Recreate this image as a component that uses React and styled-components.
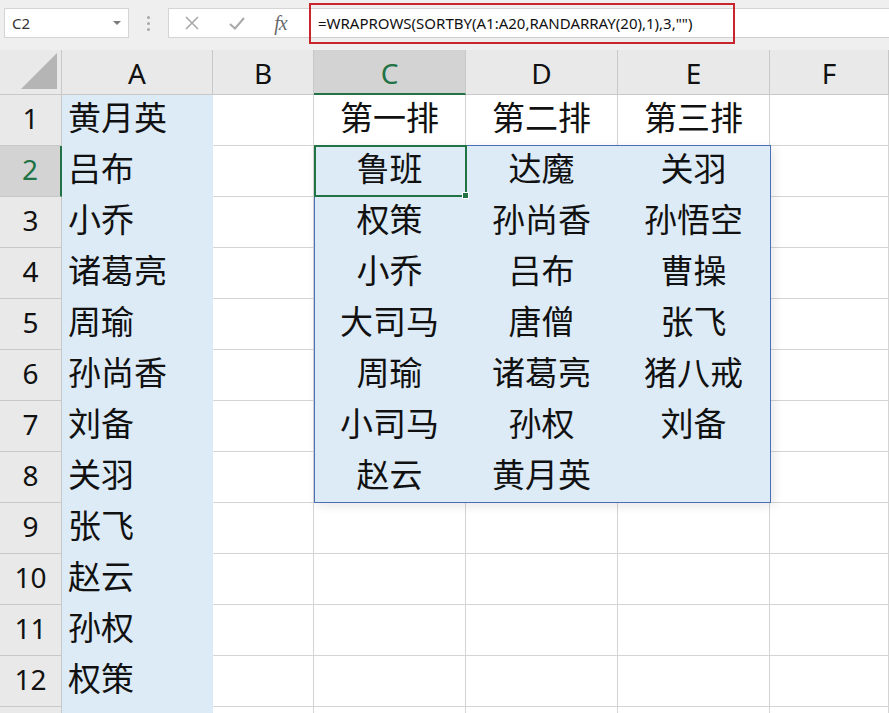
import React from "react";
import styled, { createGlobalStyle } from "styled-components";

const Global = createGlobalStyle`
  html, body { margin: 0; padding: 0; background: #ffffff; overflow: hidden; }
  body { width: 889px; height: 713px; font-family: "Noto Sans", "Noto Sans CJK SC", sans-serif; }
`;

const Page = styled.div`
  width: 889px;
  height: 713px;
  overflow: hidden;
  display: flex;
  flex-direction: column;
  background: #e9e9e9;
`;

const Toolbar = styled.div`
  flex-shrink: 0;
  height: 50px;
  box-sizing: border-box;
  padding-top: 8px;
  display: flex;
  align-items: flex-start;
  background: #efefef;
`;

const NameBox = styled.div`
  margin-left: 4px;
  width: 125px;
  height: 30px;
  box-sizing: border-box;
  background: #fff;
  border: 1px solid #d4d4d4;
  display: flex;
  align-items: center;
  justify-content: space-between;
  padding: 0 7px 0 7px;
  font-family: "Noto Sans", sans-serif;
  font-size: 15px;
  color: #333;
`;

const Caret = styled.span`
  width: 0;
  height: 0;
  border-left: 4px solid transparent;
  border-right: 4px solid transparent;
  border-top: 4px solid #7a7a7a;
`;

const Dots = styled.div`
  width: 39px;
  height: 30px;
  display: flex;
  flex-direction: column;
  align-items: center;
  justify-content: center;
  gap: 3px;
  span { width: 3px; height: 3px; background: #a8a8a8; border-radius: 50%; }
`;

const ButtonBox = styled.div`
  width: 135px;
  height: 30px;
  box-sizing: border-box;
  background: #fff;
  border: 1px solid #d4d4d4;
  border-right: none;
  display: flex;
  align-items: center;
`;

const IconBtn = styled.div`
  width: ${(p) => p.$w}px;
  height: 28px;
  display: flex;
  align-items: center;
  justify-content: center;
`;

const Fx = styled.span`
  font-family: "Liberation Serif", serif;
  font-style: italic;
  font-size: 20px;
  color: #6b6b6b;
  letter-spacing: -1px;
`;

const FormulaField = styled.div`
  position: relative;
  flex: 1;
  height: 30px;
  box-sizing: border-box;
  background: #fff;
  border-top: 1px solid #d4d4d4;
  border-bottom: 1px solid #cfcfcf;
  display: flex;
  align-items: center;
  padding-left: 15px;
  font-family: "Noto Sans", sans-serif;
  font-size: 15px;
  color: #111;
  white-space: nowrap;
`;

const RedBox = styled.div`
  position: absolute;
  left: 6px;
  top: -6px;
  width: 426px;
  height: 41px;
  box-sizing: border-box;
  border: 2px solid #c9252c;
  pointer-events: none;
`;

const Sheet = styled.div`
  position: relative;
  flex-shrink: 0;
  display: grid;
  grid-template-columns: 62px 151px 101px 152px 152px 152px 119px;
  grid-template-rows: 45px repeat(13, 51px);
  background: #fff;
`;

const Corner = styled.div`
  background: #e9e9e9;
  border-right: 1px solid #c8c8c8;
  border-bottom: 1px solid #c8c8c8;
  box-sizing: border-box;
  position: relative;
  svg { position: absolute; right: 4px; bottom: 5px; }
`;

const ColHead = styled.div`
  box-sizing: border-box;
  background: ${(p) => (p.$sel ? "#d3d3d3" : "#e9e9e9")};
  border-right: 1px solid #c8c8c8;
  border-bottom: ${(p) => (p.$sel ? "2px solid #217346" : "1px solid #c8c8c8")};
  display: flex;
  align-items: center;
  justify-content: center;
  font-family: "Noto Sans", sans-serif;
  font-size: 28px;
  line-height: 1.2;
  color: ${(p) => (p.$sel ? "#217346" : "#111")};
  padding-top: 4px;
`;

const RowHead = styled.div`
  box-sizing: border-box;
  background: ${(p) => (p.$sel ? "#d3d3d3" : "#e9e9e9")};
  border-right: ${(p) => (p.$sel ? "2px solid #217346" : "1px solid #c8c8c8")};
  border-bottom: 1px solid #c8c8c8;
  display: flex;
  align-items: center;
  justify-content: center;
  padding-bottom: 3px;
  font-family: "Noto Sans", sans-serif;
  font-size: 28px;
  line-height: 1.2;
  color: ${(p) => (p.$sel ? "#217346" : "#111")};
`;

const Cell = styled.div`
  box-sizing: border-box;
  background: ${(p) => (p.$fill ? "#ddebf7" : "#ffffff")};
  border-right: 1px solid ${(p) => (p.$fill ? "#ddebf7" : "#d4d4d4")};
  border-bottom: 1px solid ${(p) => (p.$fill ? "#ddebf7" : "#d4d4d4")};
  display: flex;
  align-items: center;
  justify-content: ${(p) => (p.$center ? "center" : "flex-start")};
  padding-left: ${(p) => (p.$center ? 0 : 6)}px;
  padding-bottom: 6px;
  font-family: "Noto Sans CJK SC", "Noto Sans", sans-serif;
  font-size: 33px;
  line-height: 1.2;
  color: #111;
  white-space: nowrap;
`;

const RangeOutline = styled.div`
  position: absolute;
  left: 314px;
  top: 95px;
  width: 457px;
  height: 358px;
  box-sizing: border-box;
  border: 1px solid #4a6fb5;
  box-shadow: 3px 3px 10px rgba(0, 0, 0, 0.1);
  pointer-events: none;
`;

const ActiveCell = styled.div`
  position: absolute;
  left: 314px;
  top: 95px;
  width: 153px;
  height: 52px;
  box-sizing: border-box;
  border: 2px solid #217346;
  pointer-events: none;
  &::after {
    content: "";
    position: absolute;
    right: -4px;
    bottom: -4px;
    width: 5px;
    height: 5px;
    background: #217346;
    border: 1px solid #fff;
  }
`;

const colA = ["黄月英", "吕布", "小乔", "诸葛亮", "周瑜", "孙尚香", "刘备", "关羽", "张飞", "赵云", "孙权", "权策", ""];
const table = [
  ["第一排", "第二排", "第三排"],
  ["鲁班", "达魔", "关羽"],
  ["权策", "孙尚香", "孙悟空"],
  ["小乔", "吕布", "曹操"],
  ["大司马", "唐僧", "张飞"],
  ["周瑜", "诸葛亮", "猪八戒"],
  ["小司马", "孙权", "刘备"],
  ["赵云", "黄月英", ""],
];
const cols = ["A", "B", "C", "D", "E", "F"];

export default function App() {
  const rows = [];
  for (let r = 0; r < 13; r++) {
    const inRange = r >= 1 && r <= 7;
    const t = table[r] || ["", "", ""];
    rows.push(
      <React.Fragment key={r}>
        <RowHead $sel={r === 1}>{r < 12 ? r + 1 : ""}</RowHead>
        <Cell $fill>{colA[r]}</Cell>
        <Cell />
        <Cell $center $fill={inRange}>{t[0]}</Cell>
        <Cell $center $fill={inRange}>{t[1]}</Cell>
        <Cell $center $fill={inRange}>{t[2]}</Cell>
        <Cell />
      </React.Fragment>
    );
  }
  return (
    <>
      <Global />
      <Page>
        <Toolbar>
          <NameBox>
            <span>C2</span>
            <Caret />
          </NameBox>
          <Dots>
            <span />
            <span />
            <span />
          </Dots>
          <ButtonBox>
            <IconBtn $w={45}>
              <svg width="16" height="16" viewBox="0 0 16 16">
                <path d="M2 2L14 14M14 2L2 14" stroke="#a9a9a9" strokeWidth="1.6" />
              </svg>
            </IconBtn>
            <IconBtn $w={45}>
              <svg width="18" height="16" viewBox="0 0 18 16">
                <path d="M2 9L7 13.5L16 3" stroke="#a9a9a9" strokeWidth="2" fill="none" />
              </svg>
            </IconBtn>
            <IconBtn $w={43}>
              <Fx>fx</Fx>
            </IconBtn>
          </ButtonBox>
          <FormulaField>
            =WRAPROWS(SORTBY(A1:A20,RANDARRAY(20),1),3,"")
            <RedBox />
          </FormulaField>
        </Toolbar>
        <Sheet>
          <Corner>
            <svg width="36" height="36" viewBox="0 0 36 36">
              <polygon points="36,0 36,36 0,36" fill="#b5b5b5" />
            </svg>
          </Corner>
          {cols.map((c) => (
            <ColHead key={c} $sel={c === "C"}>{c}</ColHead>
          ))}
          {rows}
          <RangeOutline />
          <ActiveCell />
        </Sheet>
      </Page>
    </>
  );
}
